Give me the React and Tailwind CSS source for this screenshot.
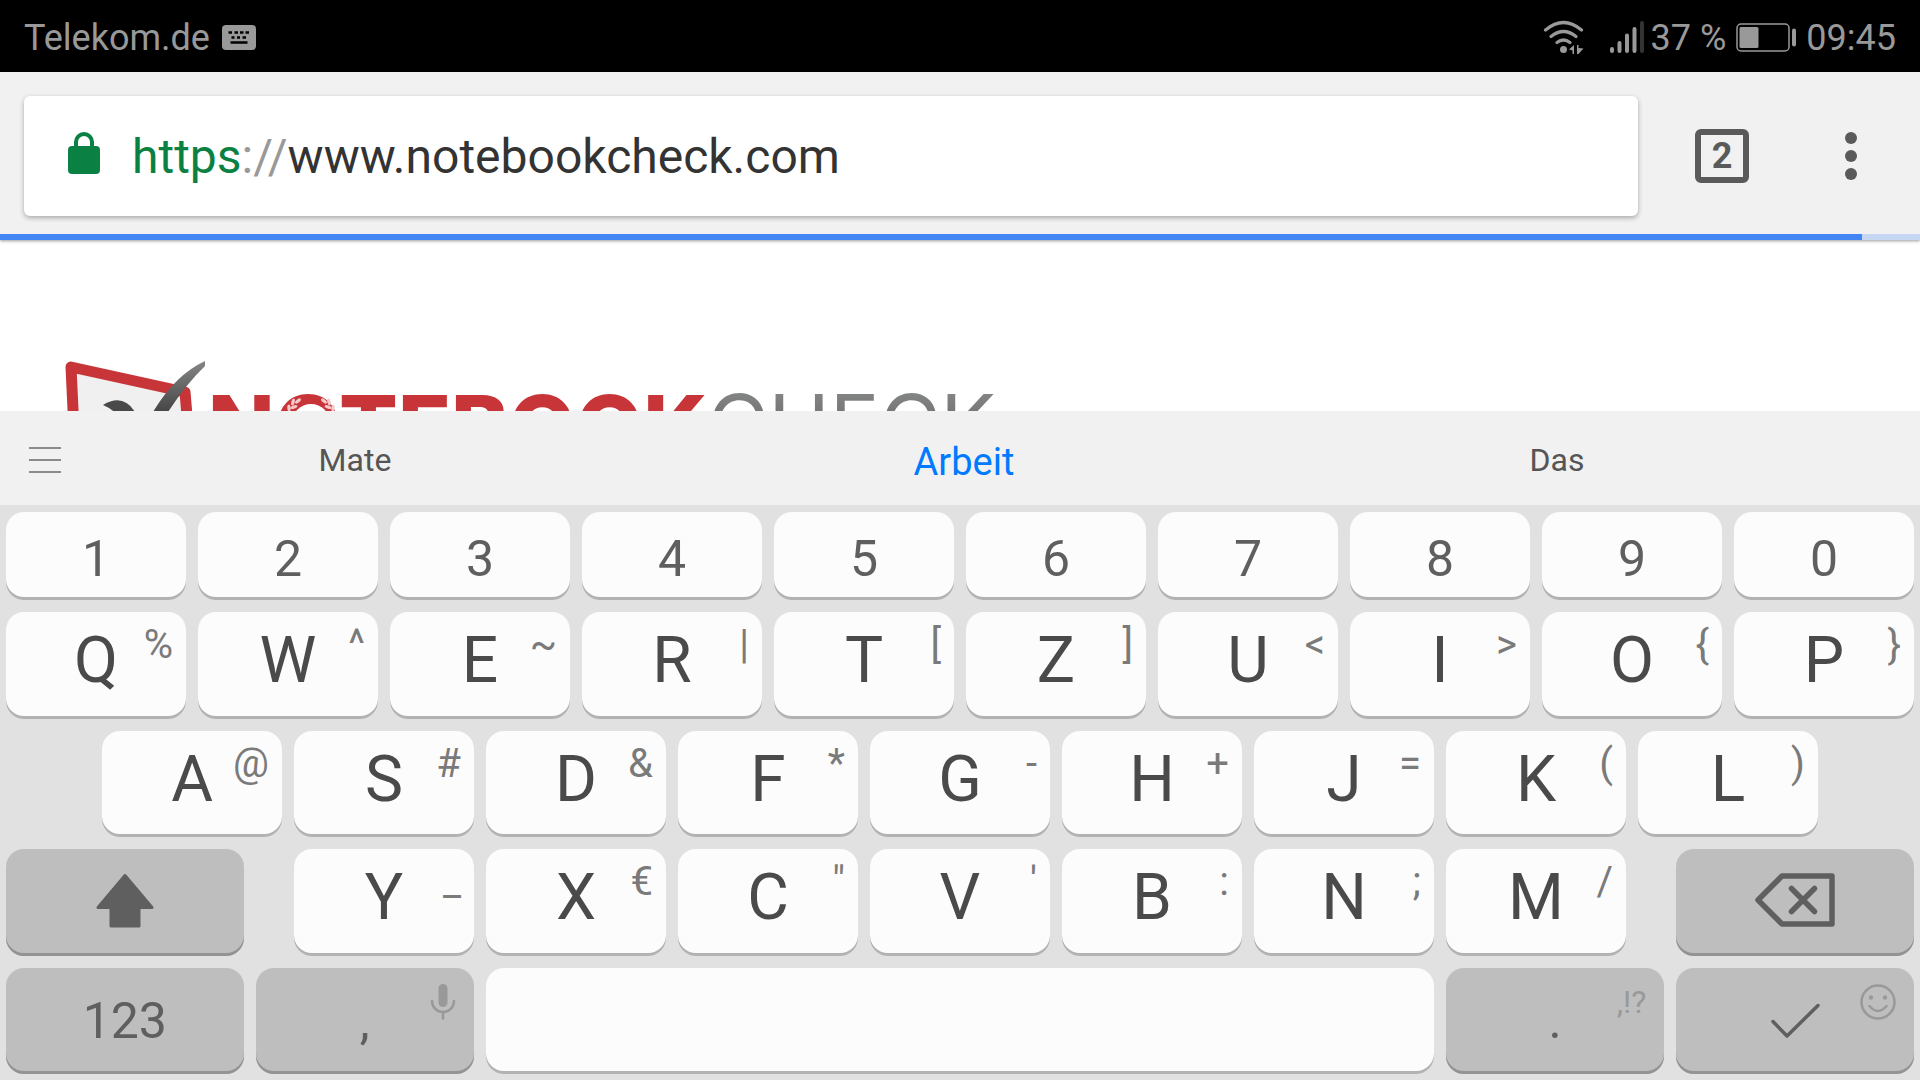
// src/App.jsx

const TOP_ROW = ["1", "2", "3", "4", "5", "6", "7", "8", "9", "0"];

const LETTER_ROWS = [
  [["Q", "%"], ["W", "^"], ["E", "~"], ["R", "|"], ["T", "["], ["Z", "]"], ["U", "<"], ["I", ">"], ["O", "{"], ["P", "}"]],
  [["A", "@"], ["S", "#"], ["D", "&"], ["F", "*"], ["G", "-"], ["H", "+"], ["J", "="], ["K", "("], ["L", ")"]],
  [["Y", "_"], ["X", "€"], ["C", '"'], ["V", "'"], ["B", ":"], ["N", ";"], ["M", "/"]],
];

function Key({ cell = "w-[10%]", dark = false, label, children }) {
  return (
    <div className={`${cell} px-1.5`}>
      <button
        type="button"
        aria-label={label}
        className={
          dark
            ? "relative flex h-full w-full items-center justify-center rounded-[18px] bg-[#bebebe] text-[50px] leading-none text-[#5f5f5f] shadow-[inset_0_-3px_0_#939393]"
            : "relative flex h-full w-full items-center justify-center rounded-[18px] bg-[#fcfcfc] text-[50px] leading-none text-[#5f5f5f] shadow-[inset_0_-3px_0_#b2b2b2]"
        }
      >
        {children}
      </button>
    </div>
  );
}

function LetterKey({ letter, hint }) {
  return (
    <Key>
      <span className="pb-2 text-[64px] leading-none text-[#4a4a4a]">{letter}</span>
      <span className="absolute top-[13px] right-[13px] text-[40px] leading-none text-[#7a7a7a]">{hint}</span>
    </Key>
  );
}

function StatusBar() {
  return (
    <header className="flex h-[72px] items-center justify-between bg-black px-6 pt-1 text-4xl text-[#999]">
      <div className="flex items-center gap-3">
        <span>Telekom.de</span>
        <svg width="34" height="26" viewBox="0 0 34 26" aria-hidden="true">
          <rect width="34" height="25" rx="4" fill="#999" />
          <path
            d="M6.500 7.500h3.500M12.500 7.500h3.500M18 7.500h3.500M23.500 7.500h3.500M9.500 12.500h3M15 12.500h3M20.500 12.500h3.500M8.500 17.500h17"
            stroke="#000"
            strokeWidth="2.400"
          />
        </svg>
      </div>
      <div className="flex items-center">
        <svg width="42" height="36" viewBox="0 0 42 36" fill="none" stroke="#999" strokeLinecap="round" aria-hidden="true">
          <path d="M2.500 10Q20.500 -5 38.500 10" strokeWidth="3.200" />
          <path d="M8 16.500Q20.500 6.500 33 16.500" strokeWidth="3.200" />
          <path d="M14 22.500Q20.500 17.500 27 22.500" strokeWidth="3.200" />
          <circle cx="20.500" cy="29.500" r="3.500" fill="#999" stroke="none" />
          <path d="M26 29.500 31 25v9h-1.500v-3.500zM34 25h1.500v3l5 .5-5 5.500h-1.500z" fill="#999" stroke="none" />
        </svg>
        <svg className="ml-6 mr-1.5" width="36" height="34" viewBox="0 0 36 34" strokeWidth="4" strokeLinecap="round" stroke="#999" aria-hidden="true">
          <path d="M3 28v2M10.500 22v8M18 14.500v15.500M25.500 8v22" />
          <path d="M33 2v28" stroke="#333" />
        </svg>
        <span>37 %</span>
        <svg className="mr-2.5 ml-2.5" width="60" height="30" viewBox="0 0 60 30" aria-hidden="true">
          <rect x="1" y="1" width="52" height="27" rx="4" fill="none" stroke="#999" strokeWidth="1.500" />
          <rect x="3.500" y="4" width="19" height="21" rx="1.500" fill="#999" />
          <rect x="56" y="5.500" width="4" height="18" rx="2" fill="#999" />
        </svg>
        <span>09:45</span>
      </div>
    </header>
  );
}

function Toolbar() {
  return (
    <div className="relative z-10 bg-[#f1f1f1] shadow-[0_1px_3px_rgba(0,0,0,0.4)]">
      <div className="flex items-center pt-6 pb-[18px] pl-6">
        <label className="relative flex h-[120px] flex-1 items-center rounded-md bg-white pl-11 shadow-[0_2px_5px_rgba(0,0,0,0.3)]">
          <svg width="32" height="48" viewBox="0 0 32 48" aria-hidden="true">
            <rect y="14" width="32" height="28" rx="4" fill="#0b8043" />
            <path d="M8 16v-6a8 8 0 0 1 16 0v6" fill="none" stroke="#0b8043" strokeWidth="4" />
          </svg>
          {/* the address is shown in parts, the field itself takes the typing */}
          <span className="ml-8 pt-0.5 text-5xl text-[#333]">
            <span className="text-[#0b8043]">https</span>
            <span className="text-[#999]">://</span>www.notebookcheck.com
          </span>
          <input type="text" aria-label="Address" className="absolute inset-0 bg-transparent outline-none" />
        </label>
        <div className="flex items-center gap-24 pr-[63px] pl-[57px]">
          <button
            type="button"
            aria-label="Open tabs"
            className="flex size-[54px] items-center justify-center rounded-md border-6 border-[#5a5a5a] text-4xl leading-none font-bold text-[#5a5a5a]"
          >
            2
          </button>
          <button type="button" aria-label="Menu" className="flex flex-col gap-1.5">
            <span className="size-3 rounded-full bg-[#5a5a5a]" />
            <span className="size-3 rounded-full bg-[#5a5a5a]" />
            <span className="size-3 rounded-full bg-[#5a5a5a]" />
          </button>
        </div>
      </div>
      <div className="h-1.5 bg-[#c6d7f3]">
        <div className="h-full w-[97%] bg-[#4285f4]" />
      </div>
    </div>
  );
}

function SiteLogo() {
  return (
    <div className="flex items-start font-[Inter] leading-none">
      <svg width="143" height="120" viewBox="0 0 143 120" aria-hidden="true">
        <defs>
          <linearGradient id="tick" x1="0" y1="0" x2="0" y2="1">
            <stop offset="0" stopColor="#858786" />
            <stop offset="0.500" stopColor="#484948" />
          </linearGradient>
        </defs>
        <path d="M6 6 120 31 127 114 11 112Z" fill="#f0f0f0" stroke="#c83539" strokeWidth="11" strokeLinejoin="round" />
        <path d="M38 44Q58 32 70 51L82 74 71 92Q62 54 38 44Z" fill="#484948" />
        <path d="M88 51Q110 14 140 0v5Q122 22 103 51L78 96 71 92Z" fill="url(#tick)" />
      </svg>
      <div className="relative flex pt-[22px]">
        <span className="text-[87px] leading-none font-extrabold text-[#c83539]">NOTEBOOK</span>
        <span className="bg-linear-to-b from-[#8a8c8b] to-[#505150] bg-clip-text text-[83px] leading-none text-transparent">
          CHECK
        </span>
        <svg className="absolute top-[31px] left-[73px]" width="60" height="62" viewBox="0 0 60 62" aria-hidden="true">
          <circle cx="30" cy="31" r="19" fill="#fff" />
          <g fill="#f3c9ca">
            <ellipse cx="17" cy="9" rx="3.500" ry="1.700" transform="rotate(-40 17 9)" />
            <ellipse cx="12" cy="10" rx="3.500" ry="1.700" transform="rotate(-75 12 10)" />
            <ellipse cx="13" cy="15" rx="3.500" ry="1.700" transform="rotate(-20 13 15)" />
            <ellipse cx="8" cy="16" rx="3.500" ry="1.700" transform="rotate(-95 8 16)" />
            <ellipse cx="43" cy="9" rx="3.500" ry="1.700" transform="rotate(40 43 9)" />
            <ellipse cx="48" cy="10" rx="3.500" ry="1.700" transform="rotate(75 48 10)" />
            <ellipse cx="47" cy="15" rx="3.500" ry="1.700" transform="rotate(20 47 15)" />
            <ellipse cx="52" cy="16" rx="3.500" ry="1.700" transform="rotate(95 52 16)" />
          </g>
        </svg>
      </div>
    </div>
  );
}

function Suggestions() {
  return (
    <div className="flex h-[94px] items-center bg-[#f1f1f1] pt-1 text-[32px] text-[#555]">
      <button type="button" aria-label="Keyboard menu" className="ml-[29px] flex w-8 flex-col gap-2.5">
        <span className="h-0.5 bg-[#8a8a8a]" />
        <span className="h-0.5 bg-[#8a8a8a]" />
        <span className="h-0.5 bg-[#8a8a8a]" />
      </button>
      <div className="grid flex-1 grid-cols-[588fr_630fr_556fr] pr-[85px]">
        <button type="button">Mate</button>
        <button type="button" className="pt-1 text-[38px] leading-none text-[#007aff]">Arbeit</button>
        <button type="button">Das</button>
      </div>
    </div>
  );
}

function Keyboard() {
  return (
    <div className="flex flex-1 flex-col gap-3 bg-[#e1e1e1] pt-[7px] pb-1.5">
      <div className="flex h-[88px]">
        {TOP_ROW.map((digit) => (
          <Key key={digit}>
            <span className="pt-1.5">{digit}</span>
          </Key>
        ))}
      </div>

      <div className="flex min-h-24 grow basis-0 justify-center">
        {LETTER_ROWS[0].map(([letter, hint]) => (
          <LetterKey key={letter} letter={letter} hint={hint} />
        ))}
      </div>

      <div className="flex min-h-24 grow basis-0 justify-center">
        {LETTER_ROWS[1].map(([letter, hint]) => (
          <LetterKey key={letter} letter={letter} hint={hint} />
        ))}
      </div>

      <div className="flex min-h-24 grow basis-0">
        <Key cell="mr-[2%] w-[13%]" dark label="Shift">
          <svg width="60" height="58" viewBox="0 0 60 58" fill="#5f5f5f" stroke="#5f5f5f" strokeWidth="3" strokeLinejoin="round" aria-hidden="true">
            <path d="M30 2.500 57 34.500H44V53H16V34.500H3Z" />
          </svg>
        </Key>
        {LETTER_ROWS[2].map(([letter, hint]) => (
          <LetterKey key={letter} letter={letter} hint={hint} />
        ))}
        <Key cell="ml-[2%] w-[13%]" dark label="Backspace">
          <svg width="80" height="58" viewBox="0 0 80 58" fill="none" stroke="#5f5f5f" strokeWidth="5.500" strokeLinejoin="round" strokeLinecap="round" aria-hidden="true">
            <path d="M3 27 27 3H77V51H27Z" />
            <path d="M36.500 15.500 59.500 38.500M59.500 15.500 36.500 38.500" />
          </svg>
        </Key>
      </div>

      <div className="flex min-h-24 grow basis-0">
        <Key cell="w-[13%]" dark>123</Key>
        <Key cell="w-[12%]" dark>
          ,
          <svg className="absolute top-4 right-[18px]" width="26" height="36" viewBox="0 0 26 36" fill="none" stroke="#999" strokeWidth="2.500" strokeLinecap="round" aria-hidden="true">
            <rect x="8.500" y="0" width="9" height="23" rx="4.500" fill="#999" stroke="none" />
            <path d="M2 17a11 11 0 0 0 22 0M13 28v6.500" />
          </svg>
        </Key>
        <Key cell="w-1/2" label="Space" />
        <Key cell="w-[12%]" dark>
          .
          <span className="absolute top-[18px] right-[18px] text-[32px] leading-none text-[#999]">,!?</span>
        </Key>
        <Key cell="w-[13%]" dark label="Enter">
          <svg width="50" height="36" viewBox="0 0 50 36" fill="none" stroke="#5f5f5f" strokeWidth="3.500" strokeLinejoin="round" strokeLinecap="round" aria-hidden="true">
            <path d="M3 18.500 17 33 48 2.500" />
          </svg>
          <svg className="absolute top-4 right-[18px]" width="36" height="36" viewBox="0 0 36 36" fill="none" stroke="#999" strokeWidth="2.500" strokeLinecap="round" aria-hidden="true">
            <circle cx="18" cy="18" r="16.500" />
            <circle cx="11" cy="13.500" r="2.200" fill="#999" stroke="none" />
            <circle cx="25" cy="13.500" r="2.200" fill="#999" stroke="none" />
            <path d="M9.500 22Q18 32 26.500 22" />
          </svg>
        </Key>
      </div>
    </div>
  );
}

export default function App() {
  return (
    <div className="flex min-h-screen flex-col bg-white font-[Roboto,sans-serif]">
      <StatusBar />
      <Toolbar />
      <main className="h-[171px] overflow-hidden bg-white pt-[121px] pl-[65px]">
        <SiteLogo />
      </main>
      <Suggestions />
      <Keyboard />
    </div>
  );
}
